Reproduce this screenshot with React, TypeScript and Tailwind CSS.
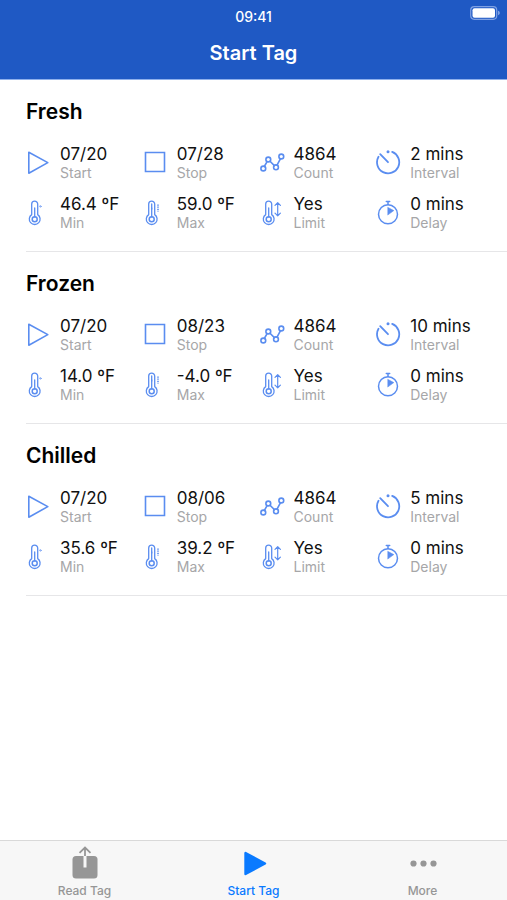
import { useState } from "react";
import type { ReactNode } from "react";

type Profile = {
  name: string;
  start: string;
  stop: string;
  count: string;
  interval: string;
  min: string;
  max: string;
  limit: string;
  delay: string;
};

const profiles: Profile[] = [
  { name: "Fresh", start: "07/20", stop: "07/28", count: "4864", interval: "2 mins", min: "46.4 ºF", max: "59.0 ºF", limit: "Yes", delay: "0 mins" },
  { name: "Frozen", start: "07/20", stop: "08/23", count: "4864", interval: "10 mins", min: "14.0 ºF", max: "-4.0 ºF", limit: "Yes", delay: "0 mins" },
  { name: "Chilled", start: "07/20", stop: "08/06", count: "4864", interval: "5 mins", min: "35.6 ºF", max: "39.2 ºF", limit: "Yes", delay: "0 mins" },
];

function Icon({ children }: { children: ReactNode }) {
  return (
    <svg
      viewBox="0 0 26 26"
      className="h-[26px] w-[26px] shrink-0"
      fill="none"
      stroke="#5a8df0"
      strokeWidth="1.6"
      strokeLinejoin="round"
      strokeLinecap="round"
      aria-hidden="true"
    >
      {children}
    </svg>
  );
}

function Thermometer() {
  return (
    <>
      <path d="M5.700 14.600V4.100a3 3 0 0 1 6 0v10.500a5.400 5.400 0 1 1-6 0z" strokeWidth="1.300" />
      <circle cx="8.700" cy="19.200" r="2.500" strokeWidth="1.500" />
      <path d="M8.700 17V8" strokeWidth="1.300" />
    </>
  );
}

const icons = {
  start: (
    <Icon>
      <path d="M2.8 2.2 21.8 12.6 2.8 23.2z" />
    </Icon>
  ),
  stop: (
    <Icon>
      <path d="M2.5 2.5h19v19h-19z" strokeLinejoin="miter" />
    </Icon>
  ),
  count: (
    <Icon>
      <path d="m4.3 16.500 2.800-4.800M10 11.300l4.400 4.300M17 15.100l3.400-6.300" />
      <circle cx="3.3" cy="18.5" r="2.4" />
      <circle cx="8.3" cy="9.5" r="2.4" />
      <circle cx="16" cy="17.3" r="2.4" />
      <circle cx="21.3" cy="6.5" r="2.4" />
    </Icon>
  ),
  interval: (
    <Icon>
      <path d="M16.2 1.900A11.100 11.100 0 1 1 2.500 6.700" strokeWidth="1.800" />
      <path d="m4.200 4.100 7.800 8.100" strokeWidth="1.800" />
      <circle cx="12" cy="1.8" r="1.5" fill="#5a8df0" stroke="none" />
    </Icon>
  ),
  min: (
    <Icon>
      <Thermometer />
      <circle cx="14.4" cy="6.4" r="0.8" strokeWidth="0.9" opacity="0.7" />
    </Icon>
  ),
  max: (
    <Icon>
      <Thermometer />
      <path d="M8.7 9V4" strokeWidth="1.3" />
      <path d="M15 4.5v7" strokeDasharray="1.2 0.9" strokeLinecap="butt" />
    </Icon>
  ),
  limit: (
    <Icon>
      <Thermometer />
      <path d="M17.7 2.7v13.100M15 5.400l2.700-2.700 2.700 2.700M15 13.100l2.700 2.700 2.700-2.700" strokeWidth="1.200" />
    </Icon>
  ),
  delay: (
    <Icon>
      <circle cx="12" cy="14.2" r="9.5" strokeWidth="1.5" />
      <path d="M10.3 1.6h3.4M12 2v2.600" strokeWidth="1.500" />
      <path d="M12 7.500 17.800 10.600 12 14.800z" fill="#5a8df0" strokeWidth="0.6" />
    </Icon>
  ),
};

function Field({ icon, value, label }: { icon: ReactNode; value: string; label: string }) {
  return (
    <div className="flex items-center gap-2">
      {icon}
      <dl className="flex flex-col-reverse whitespace-nowrap">
        <dt className="text-[14px] leading-[18px] text-[#a6a6a8]">{label}</dt>
        <dd className="text-[17px] leading-5 text-[#111]">{value}</dd>
      </dl>
    </div>
  );
}

function ProfileRow({ profile }: { profile: Profile }) {
  return (
    <li className="border-b border-[#e6e6e8] pt-[18px] pr-[14px] pb-[19px]">
      <h2 className="mb-[18px] text-[21px] leading-7 font-semibold text-black">{profile.name}</h2>
      <div className="grid grid-cols-4 gap-y-3">
        <Field icon={icons.start} value={profile.start} label="Start" />
        <Field icon={icons.stop} value={profile.stop} label="Stop" />
        <Field icon={icons.count} value={profile.count} label="Count" />
        <Field icon={icons.interval} value={profile.interval} label="Interval" />
        <Field icon={icons.min} value={profile.min} label="Min" />
        <Field icon={icons.max} value={profile.max} label="Max" />
        <Field icon={icons.limit} value={profile.limit} label="Limit" />
        <Field icon={icons.delay} value={profile.delay} label="Delay" />
      </div>
    </li>
  );
}

const tabs = [
  {
    name: "Read Tag",
    icon: (
      <>
        <rect x="3.5" y="10" width="25" height="22.5" rx="3.5" fill="currentColor" />
        <path d="M16 9v12.5" stroke="#f7f7f7" strokeWidth="3" />
        <path d="M16 10V1.5M10.500 6.800 16 1.500l5.500 5.300" fill="none" stroke="currentColor" strokeWidth="1.8" />
      </>
    ),
  },
  {
    name: "Start Tag",
    icon: (
      <path
        d="M7.5 7v21L27 17.500z"
        fill="currentColor"
        stroke="currentColor"
        strokeWidth="2.4"
        strokeLinejoin="round"
      />
    ),
  },
  {
    name: "More",
    icon: (
      <>
        <circle cx="6.5" cy="17.5" r="3.1" fill="currentColor" />
        <circle cx="16.5" cy="17.5" r="3.1" fill="currentColor" />
        <circle cx="26.5" cy="17.5" r="3.1" fill="currentColor" />
      </>
    ),
  },
];

export default function App() {
  const [activeTab, setActiveTab] = useState("Start Tag");

  return (
    <div className="flex min-h-screen flex-col bg-white font-['Inter','Liberation_Sans',sans-serif]">
      <header className="border-b border-[#8fb0ec] bg-[#1f59c4] text-center text-white">
        <div className="grid grid-cols-3 items-start px-1.5 pt-1.5">
          <span className="col-start-2 pt-px text-[14px] leading-5 font-medium">09:41</span>
          <svg viewBox="0 0 31 14" className="h-[14px] w-[31px] justify-self-end" aria-label="Battery full" role="img">
            <rect x="0.7" y="0.7" width="26" height="12.6" rx="3.5" fill="none" stroke="#7fa1e3" strokeWidth="1.2" />
            <rect x="2.5" y="2.3" width="22.5" height="9.4" rx="2" fill="#fff" />
            <path d="M28 4.8c2.4.6 2.4 3.8 0 4.4z" fill="#7fa1e3" />
          </svg>
        </div>
        <h1 className="py-3 text-[20px] leading-7 font-semibold">Start Tag</h1>
      </header>

      <main className="flex-1">
        <ul className="ml-[26px]">
          {profiles.map((profile) => (
            <ProfileRow key={profile.name} profile={profile} />
          ))}
        </ul>
      </main>

      <nav className="sticky bottom-0 grid grid-cols-3 border-t border-[#d9d9d9] bg-[#f7f7f7]">
        {tabs.map((tab) => (
          <button
            key={tab.name}
            type="button"
            onClick={() => setActiveTab(tab.name)}
            className={`flex flex-col items-center gap-[3px] pt-[5px] pb-px ${
              activeTab === tab.name ? "text-[#0a7aff]" : "text-[#969696]"
            }`}
          >
            <svg viewBox="0 0 32 34" className="h-[34px] w-8" aria-hidden="true">
              {tab.icon}
            </svg>
            <span className="text-[12px] leading-4 font-medium">{tab.name}</span>
          </button>
        ))}
      </nav>
    </div>
  );
}
